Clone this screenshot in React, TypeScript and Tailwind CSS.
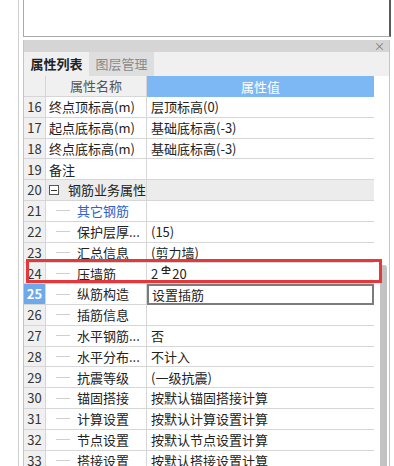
import React from "react";

type Row = {
  no: number;
  name: string;
  value: React.ReactNode;
  level: 0 | 1 | 2;
  group?: boolean;
  link?: boolean;
  active?: boolean;
};

// HRB400 rebar grade symbol
const Rebar = () => (
  <svg
    width="10"
    height="11"
    viewBox="0 0 10 11"
    className="inline-block ml-[3px] mr-[1px] -translate-y-[3px]"
    fill="none"
    stroke="#222"
    strokeWidth="1.1"
  >
    <line x1="5" y1="0.5" x2="5" y2="9" />
    <path d="M1 5.5 Q1 2.4 5 2.4 Q9 2.4 9 5.5 Z" />
    <line x1="1.5" y1="8.5" x2="8.5" y2="8.5" />
  </svg>
);

const rows: Row[] = [
  { no: 16, name: "终点顶标高(m)", value: "层顶标高(0)", level: 0 },
  { no: 17, name: "起点底标高(m)", value: "基础底标高(-3)", level: 0 },
  { no: 18, name: "终点底标高(m)", value: "基础底标高(-3)", level: 0 },
  { no: 19, name: "备注", value: "", level: 0 },
  { no: 20, name: "钢筋业务属性", value: "", level: 1, group: true },
  { no: 21, name: "其它钢筋", value: "", level: 2, link: true },
  { no: 22, name: "保护层厚...", value: "(15)", level: 2 },
  { no: 23, name: "汇总信息", value: "(剪力墙)", level: 2 },
  {
    no: 24,
    name: "压墙筋",
    value: (
      <>
        2<Rebar />20
      </>
    ),
    level: 2,
  },
  { no: 25, name: "纵筋构造", value: "设置插筋", level: 2, active: true },
  { no: 26, name: "插筋信息", value: "", level: 2 },
  { no: 27, name: "水平钢筋...", value: "否", level: 2 },
  { no: 28, name: "水平分布...", value: "不计入", level: 2 },
  { no: 29, name: "抗震等级", value: "(一级抗震)", level: 2 },
  { no: 30, name: "锚固搭接", value: "按默认锚固搭接计算", level: 2 },
  { no: 31, name: "计算设置", value: "按默认计算设置计算", level: 2 },
  { no: 32, name: "节点设置", value: "按默认节点设置计算", level: 2 },
  { no: 33, name: "搭接设置", value: "按默认搭接设置计算", level: 2 },
];

const font = { fontFamily: '"Noto Sans CJK SC", "Noto Sans", sans-serif' };

const App = () => {
  return (
    <div
      className="relative w-[394px] h-[466px] overflow-hidden bg-white text-[13px] text-[#222]"
      style={font}
    >
      <div className="flex h-full">
        <div className="w-[18px] shrink-0" />
        <div className="flex-1 border-l border-[#cfcfcf] pl-[4px] flex flex-col">
          {/* top blank box */}
          <div className="h-[37px] w-[368px] shrink-0 bg-white border-l border-b border-[#a9a9a9] border-r-2 border-r-[#5a5a5a]" />

          {/* property panel */}
          <div className="mt-[3px] w-[367px] flex-1 flex flex-col border-l border-r border-[#c4c4c4] bg-white">
            {/* title bar */}
            <div className="h-[12px] bg-[#d5d5d5] flex items-center justify-end pr-[4px]">
              <span className="text-[11px] leading-none text-[#777]">×</span>
            </div>

            {/* tabs */}
            <div className="h-[24px] bg-[#f0f0f0] flex items-stretch">
              <div className="w-[65px] flex items-center justify-center font-bold text-[#222]">
                属性列表
              </div>
              <div className="w-[65px] flex items-center justify-center bg-[#dedede] text-[#8a8a8a]">
                图层管理
              </div>
            </div>

            {/* header */}
            <div className="flex h-[21px]">
              <div className="w-[22px] bg-[#f0f0f0] border-r border-b border-[#d6d6d6]" />
              <div className="w-[101px] bg-[#f0f0f0] border-r border-b border-[#d6d6d6] flex items-center justify-center text-[#555]">
                属性名称
              </div>
              <div className="w-[227px] bg-[#7eb8f4] flex items-center justify-center text-white">
                属性值
              </div>
              <div className="flex-1 bg-white" />
            </div>

            {/* rows */}
            {rows.map((r) => (
              <div key={r.no} className="flex h-[20.8px] shrink-0">
                <div
                  className={`w-[22px] flex items-center justify-center border-r border-b border-[#d6d6d6] ${
                    r.active
                      ? "bg-[#6fa9ea] text-white font-bold"
                      : "bg-[#f0f0f0] text-[#333]"
                  }`}
                >
                  {r.no}
                </div>
                <div
                  className={`w-[101px] flex items-center border-r border-b border-[#d6d6d6] whitespace-nowrap overflow-hidden ${
                    r.group ? "bg-[#ececec]" : "bg-white"
                  }`}
                >
                  {r.level === 0 && <span className="pl-[3px]">{r.name}</span>}
                  {r.level === 1 && (
                    <>
                      <span className="ml-[3px] w-[10px] h-[10px] border border-[#555] flex items-center justify-center bg-white">
                        <span className="w-[6px] h-px bg-[#333]" />
                      </span>
                      <span className="pl-[9px]">{r.name}</span>
                    </>
                  )}
                  {r.level === 2 && (
                    <>
                      <span className="ml-[10px] w-[14px] h-px bg-[#cfcfcf]" />
                      <span
                        className={`pl-[7px] ${r.link ? "text-[#2c62c9]" : ""}`}
                      >
                        {r.name}
                      </span>
                    </>
                  )}
                </div>
                <div
                  className={`w-[227px] flex items-center whitespace-nowrap overflow-hidden ${
                    r.active
                      ? "border-2 border-[#7c7c7c] pl-[3px]"
                      : "border-b border-[#d6d6d6] pl-[4px]"
                  } ${r.group ? "bg-[#ececec]" : "bg-white"}`}
                >
                  {r.value}
                </div>
                <div className="flex-1 bg-white" />
              </div>
            ))}
          </div>
        </div>
      </div>

      {/* vertical scrollbar thumb */}
      <div className="absolute left-[380px] top-[265px] w-[7px] h-[210px] rounded-t-[3px] bg-[#c3c3c3]" />

      {/* red highlight box */}
      <div className="absolute left-[26px] top-[259px] w-[356px] h-[24px] border-[3px] border-[#e5383b]" />
    </div>
  );
};

export default App;
